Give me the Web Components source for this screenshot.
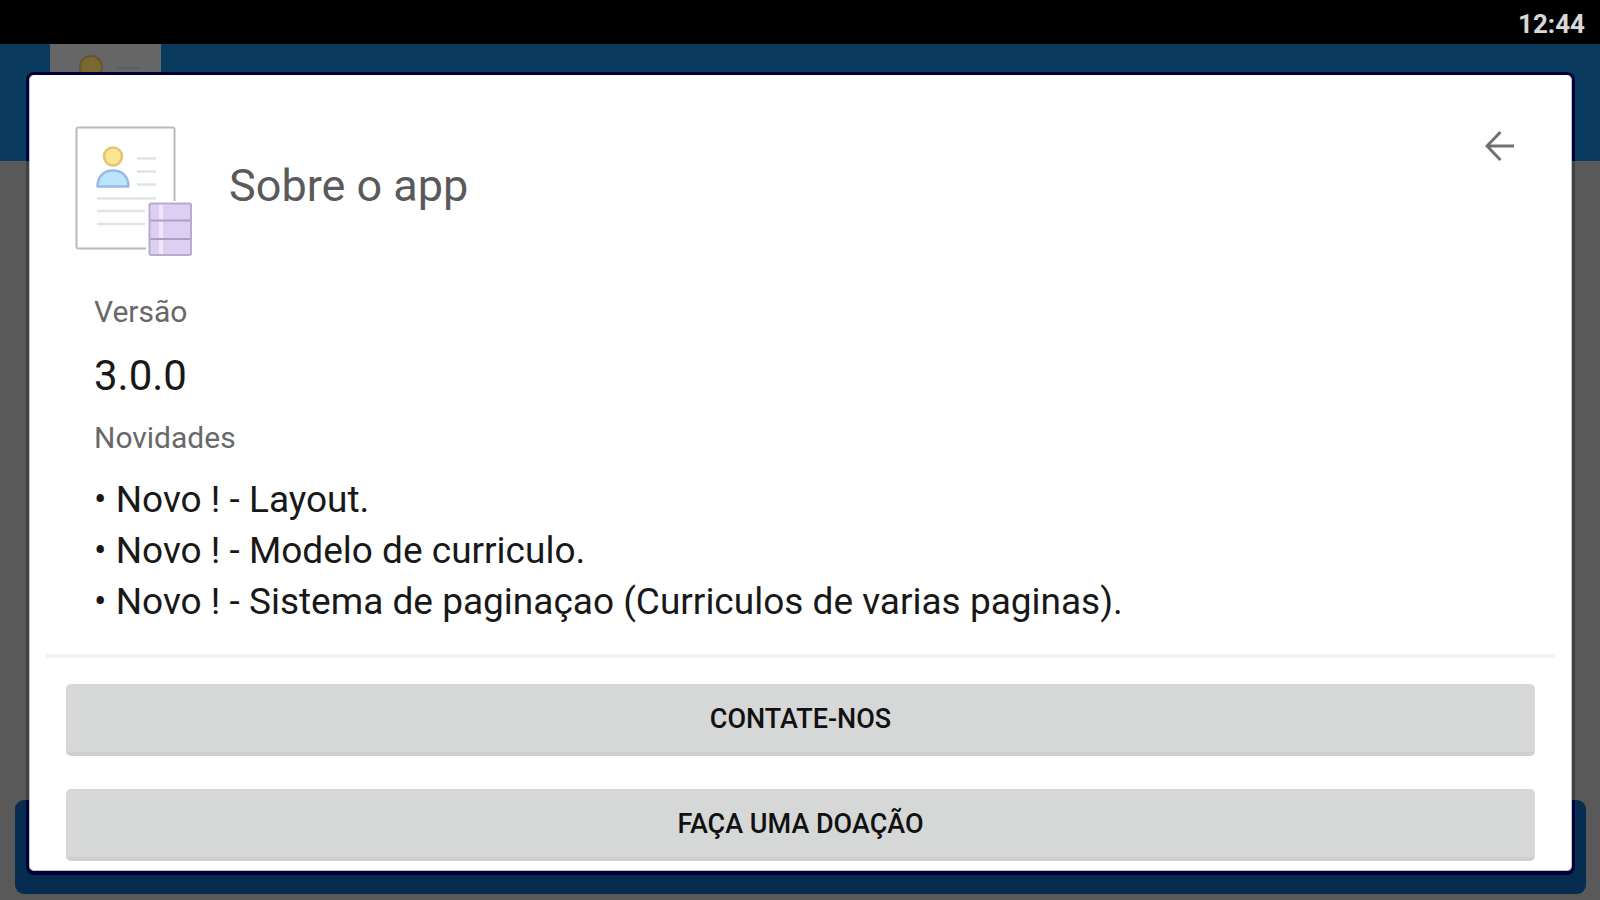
<!DOCTYPE html>
<html lang="pt-BR">
<head>
<meta charset="utf-8">
<meta name="viewport" content="width=device-width, initial-scale=1">
<title>Sobre o app</title>
<style>
  body { margin: 0; font-family: Roboto, "Noto Sans", sans-serif; background: #595959; }
</style>
</head>
<body>
<cv-screen>
  <cv-status slot="status">12:44</cv-status>
  <cv-backdrop slot="backdrop"></cv-backdrop>
  <cv-dialog slot="dialog" heading="Sobre o app">
    <cv-field label="Versão" size="large">3.0.0</cv-field>
    <cv-field label="Novidades">
      <cv-news>Novo ! - Layout.</cv-news>
      <cv-news>Novo ! - Modelo de curriculo.</cv-news>
      <cv-news>Novo ! - Sistema de paginaçao (Curriculos de varias paginas).</cv-news>
    </cv-field>
    <cv-button slot="actions">CONTATE-NOS</cv-button>
    <cv-button slot="actions">FAÇA UMA DOAÇÃO</cv-button>
  </cv-dialog>
</cv-screen>
<script>
function define(name, html, setup) {
  const template = document.createElement('template');
  template.innerHTML = html;
  customElements.define(name, class extends HTMLElement {
    connectedCallback() {
      if (this.shadowRoot) return;
      this.attachShadow({ mode: 'open' }).append(template.content.cloneNode(true));
      if (setup) setup(this, this.shadowRoot);
    }
  });
}

define('cv-screen', `
  <style>
    :host { display: flex; flex-direction: column; min-height: 100vh; }
    .stage { position: relative; flex: 1; display: grid; }
    .stage > * { grid-area: 1 / 1; }
    .over { position: relative; padding: 28px 25px 25px 26px; display: grid; }
  </style>
  <slot name="status"></slot>
  <div class="stage">
    <slot name="backdrop"></slot>
    <div class="over"><slot name="dialog"></slot></div>
  </div>`);

define('cv-status', `
  <style>
    :host { display: flex; justify-content: flex-end; align-items: center; height: 44px; padding: 4px 15px 0 0;
      box-sizing: border-box; background: #000; color: #d8d8d8; font-size: 26px; font-weight: 700; line-height: 32px; }
  </style>
  <slot></slot>`);

define('cv-backdrop', `
  <style>
    :host { display: flex; flex-direction: column; justify-content: space-between; grid-area: 1 / 1; background: #595959; }
    header { height: 117px; padding-left: 50px; background: #0b3a5f; }
    svg { display: block; }
    .bar { height: 94px; margin: 0 14px 6px 15px; border-radius: 9px; background: #062d50; }
  </style>
  <header>
    <svg width="111" height="117" viewBox="0 0 111 117" aria-hidden="true">
      <rect width="111" height="117" fill="#666"/>
      <circle cx="41" cy="23" r="11" fill="#79692f" stroke="#66552a" stroke-width="2"/>
      <path d="M67 24H90" stroke="#5b5f60" stroke-width="2"/>
    </svg>
  </header>
  <div class="bar"></div>`);

define('cv-logo', `
  <style>:host { display: block; } svg { display: block; }</style>
  <svg width="120" height="132" viewBox="75 125 120 132" aria-hidden="true">
    <rect x="76.5" y="127.5" width="98" height="121" rx="2" fill="#fff" stroke="#b4babf" stroke-width="2"/>
    <path d="M137 158.500H156M137 171.500H156M137 184.500H156M97 198.500H156M97 211H145M97 224H145" stroke="#dfe5e7" stroke-width="2.500"/>
    <circle cx="113" cy="156.500" r="9" fill="#fbe591" stroke="#e3c375" stroke-width="2.500"/>
    <path d="M97.500 186.500C97.500 176 104 170.500 113 170.500S128.500 176 128.500 186.500Z" fill="#b9e4fc" stroke="#9bb9e4" stroke-width="2.500" stroke-linejoin="round"/>
    <rect x="146" y="201" width="48" height="56" fill="#fff"/>
    <rect x="149.500" y="203.500" width="41.500" height="51.500" rx="1.500" fill="#dccff1"/>
    <path d="M161 204V255" stroke="#eee7fb" stroke-width="4"/>
    <path d="M150 220.500H191M150 239H191" stroke="#b09dc6" stroke-width="2"/>
    <rect x="149.500" y="203.500" width="41.500" height="51.500" rx="1.500" fill="none" stroke="#b9abcb" stroke-width="2"/>
  </svg>`);

define('cv-dialog', `
  <style>
    :host { display: grid; padding: 3px 3px 4px; border-radius: 8px;
      background: linear-gradient(#00003a 89px, #414141 89px, #414141 calc(100% - 75px), #00003a calc(100% - 75px)); }
    section { display: flex; flex-direction: column; box-sizing: border-box; padding: 50px 16px 9px;
      border: 1px solid #c4c4c4; border-top: 0; border-radius: 5px; background: #fff; }
    header { display: flex; align-items: flex-start; padding: 0 40px 0 29px; }
    h1 { flex: 1; margin: 35px 0 0 34px; color: #5a5a5a; font-size: 45px; line-height: 52px; font-weight: 400; }
    button { display: grid; margin: 0; padding: 0; border: 0; background: none; cursor: pointer; }
    .body { display: flex; flex-direction: column; flex: 1; gap: 16px; padding: 37px 48px 0; }
    .actions { display: flex; flex-direction: column; gap: 33px; padding: 26px 20px 0; border-top: 4px solid #f1f1f1; }
  </style>
  <section role="dialog" aria-labelledby="heading">
    <header>
      <cv-logo></cv-logo>
      <h1 id="heading"></h1>
      <button type="button" aria-label="Voltar">
        <svg width="30" height="42" viewBox="0 0 30 42" fill="none" stroke="#707070" stroke-width="3">
          <path d="M29 21H3M15.500 7L2 21L15.500 35"/>
        </svg>
      </button>
    </header>
    <div class="body"><slot></slot></div>
    <div class="actions"><slot name="actions"></slot></div>
  </section>`, (host, root) => {
    root.querySelector('h1').textContent = host.getAttribute('heading');
  });

define('cv-field', `
  <style>
    :host { display: block; color: #181818; font-size: 37px; line-height: 51px; }
    :host([size=large]) { font-size: 42px; line-height: 56px; }
    h2 { margin: 0 0 18px; color: #686868; font-size: 30px; line-height: 36px; font-weight: 400; }
  </style>
  <h2></h2><div><slot></slot></div>`, (host, root) => {
    root.querySelector('h2').textContent = host.getAttribute('label');
  });

define('cv-news', `
  <style>:host { display: block; }</style>• <slot></slot>`);

define('cv-button', `
  <style>
    :host { display: block; }
    button { display: block; width: 100%; height: 72px; margin: 0; padding: 2px 0 0; border: 0; border-bottom: 4px solid #cecfce;
      border-radius: 5px; background: #d6d8d7; color: #111; font: 500 27px/32px Roboto, "Noto Sans", sans-serif; cursor: pointer; }
  </style>
  <button type="button"><slot></slot></button>`);
</script>
</body>
</html>
